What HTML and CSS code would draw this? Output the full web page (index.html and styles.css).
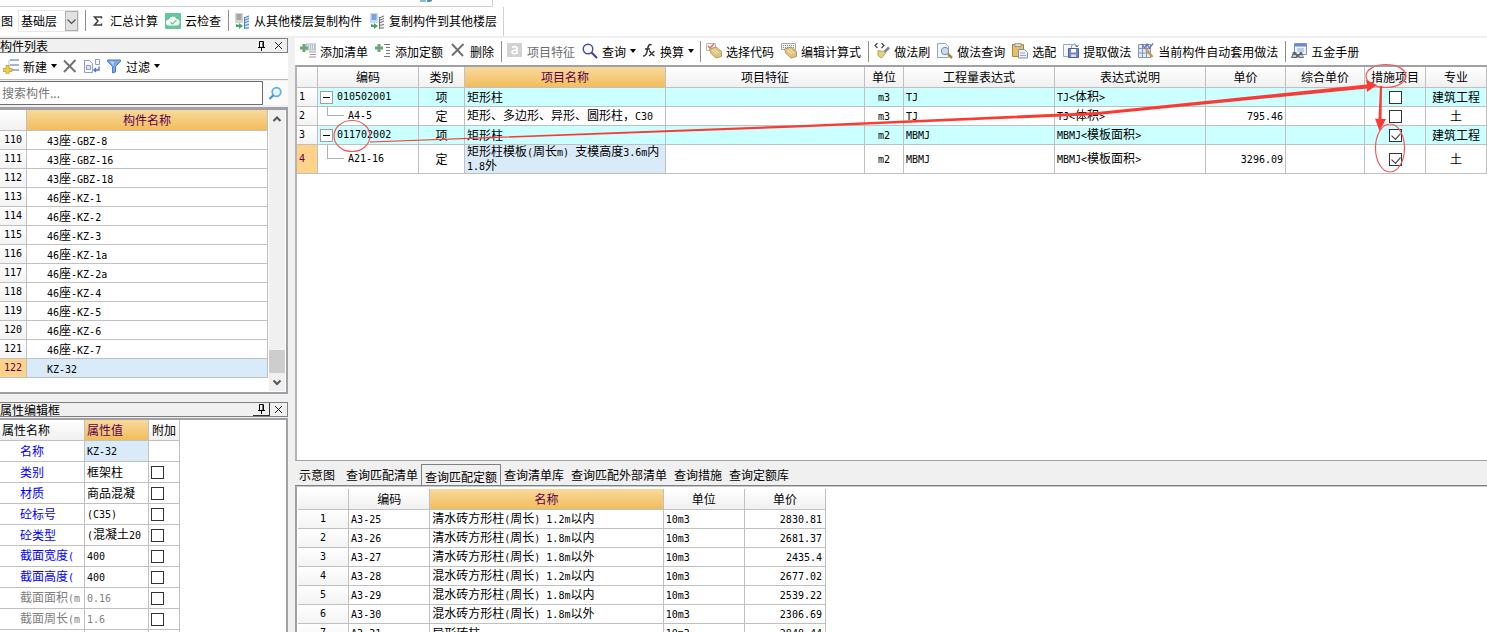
FILE: index.html
```html
<!DOCTYPE html>
<html lang="zh-CN">
<head>
<meta charset="utf-8">
<title>构件做法</title>
<link rel="stylesheet" href="styles.css">
</head>
<body>
<div class="app">
  <div class="upper-strip"><svg width="14" height="3" viewBox="0 0 14 3"><path d="M0 0h6v2H0z" fill="#7fc0d8"/><path d="M7 0h5v1l-2 1H7z" fill="#4f8fc0"/></svg></div>
  <div class="topbar">
    <span class="cut">图</span>
    <span class="select-box">
      <select aria-label="楼层"><option>基础层</option></select>
      <svg class="select-arrow" width="13" height="20" viewBox="0 0 13 20"><rect x=".5" y=".5" width="12" height="19" fill="#e1e1e1" stroke="#adadad"/><path d="M2.500 8.500l4 4 4-4" fill="none" stroke="#505050" stroke-width="1.200"/></svg>
    </span>
    <i class="sep"></i>
    <button class="tb"><svg width="15" height="16" viewBox="0 0 15 16"><path d="M10.500 5.500V4H3.500L7 8l-3.500 4h7v-1.500" fill="none" stroke="#404040" stroke-width="1.500"/></svg>汇总计算</button>
    <button class="tb"><svg width="16" height="16" viewBox="0 0 16 16"><rect width="16" height="16" rx="1" fill="#62c89a"/><path d="M4 12.500a3 3 0 0 1 0-6 4 4 0 0 1 7.500-.5 3.300 3.300 0 0 1 .5 6.500z" fill="#fff"/><path d="M5.500 9l2 2 4-4" fill="none" stroke="#62c89a" stroke-width="1.300"/></svg>云检查</button>
    <i class="sep"></i>
    <button class="tb"><svg width="16" height="16" viewBox="0 0 16 16"><path d="M1 0h8v10H1z" fill="#d4d4d4"/><path d="M2.500 2h5M2.500 4h5M2.500 6h5" stroke="#777"/><path d="M10 4l5-2v14h-5z" fill="#d7e7fa"/><path d="M10 5l5-2M10 7.500l5-2M10 10l5-2M10 12.500l5-1M10 15h5M10.500 4v12" stroke="#4a83c8" fill="none"/><path d="M2 11v3h3v2l4-3-4-3v2z" fill="#43a866"/></svg>从其他楼层复制构件</button>
    <button class="tb"><svg width="16" height="16" viewBox="0 0 16 16"><path d="M1 0h8v10H1z" fill="#c6dbf5"/><path d="M2.500 2h5M2.500 4h5M2.500 6h5" stroke="#356fb3"/><path d="M10 4l5-2v14h-5z" fill="#eee"/><path d="M10 5l5-2M10 7.500l5-2M10 10l5-2M10 12.500l5-1M10 15h5M10.500 4v12" stroke="#777" fill="none"/><path d="M2 11v3h3v2l4-3-4-3v2z" fill="#43a866"/></svg>复制构件到其他楼层</button>
  </div>

  <div class="main">
    <aside class="left">
      <section class="panel">
        <header class="title"><h2>构件列表</h2>
          <button class="tbtn" aria-label="固定"><svg width="9" height="10" viewBox="0 0 9 10"><path d="M2.500 6V.5h4V6M1 6.500h7M4.500 7v3M6 1v5" fill="none" stroke="#000"/></svg></button>
          <button class="tbtn" aria-label="关闭"><svg width="9" height="9" viewBox="0 0 9 9"><path d="M1 1l7 7M8 1L1 8" stroke="#222"/></svg></button>
        </header>
        <div class="ltools">
          <button class="tb"><svg width="16" height="16" viewBox="0 0 16 16"><path d="M7 2h9M7 7h9M7 12h9" stroke="#8aa0b8" stroke-width="1.500"/><path d="M6 2v10" stroke="#b8c6d4"/><path d="M3 7.500h3v3h3v3H6v3H3v-3H0v-3h3z" fill="#f2cc4e" stroke="#b9922c" stroke-width=".7"/></svg>新建<b class="caret"></b></button>
          <button class="tb" aria-label="删除"><svg width="16" height="16" viewBox="0 0 16 16"><path d="M2 2.500L13.500 14M13.500 2L2 14" stroke="#707070" stroke-width="1.900"/></svg></button>
          <button class="tb" aria-label="复制"><svg width="16" height="16" viewBox="0 0 16 16"><path d="M.5 2.500h5l3 3v9h-8z" fill="#f6f8fb" stroke="#8ba0c0"/><path d="M2.500 7.500h4v4h-4z" fill="#dce4f0" stroke="#8ba0c0"/><path d="M11.500 1.500h4v5h-4z" fill="#f6f8fb" stroke="#8ba0c0"/><path d="M15 8.500v3.500h-5M12 10l-2 2 2 2" fill="none" stroke="#4f6ee0" stroke-width="1.300"/></svg></button>
          <button class="tb"><svg width="16" height="16" viewBox="0 0 16 16"><path d="M1.500 2h13v1.500L9.500 8.500V14l-3 1V8.500l-5-5z" fill="#7ba6ea" stroke="#4c79c8"/><path d="M4 3.500h4L7.800 8z" fill="#bcd4fa"/></svg>过滤<b class="caret"></b></button>
        </div>
        <div class="search">
          <input type="text" placeholder="搜索构件..." aria-label="搜索构件">
          <button aria-label="搜索"><svg width="15" height="15" viewBox="0 0 15 15"><circle cx="8.500" cy="6" r="4.300" fill="#e9f5fd" stroke="#5fb0e6" stroke-width="1.800"/><path d="M5.300 9.300L1.500 13" stroke="#3d91d6" stroke-width="2.200"/></svg></button>
        </div>
        <div class="listbox">
          <table class="grid list">
            <colgroup><col class="w27"><col></colgroup>
            <thead><tr><th></th><th class="hot">构件名称</th></tr></thead>
            <tbody>
              <tr><th class="en">110</th><td><span class="en">43</span>座<span class="en">-GBZ-8</span></td></tr>
              <tr><th class="en">111</th><td><span class="en">43</span>座<span class="en">-GBZ-16</span></td></tr>
              <tr><th class="en">112</th><td><span class="en">43</span>座<span class="en">-GBZ-18</span></td></tr>
              <tr><th class="en">113</th><td><span class="en">46</span>座<span class="en">-KZ-1</span></td></tr>
              <tr><th class="en">114</th><td><span class="en">46</span>座<span class="en">-KZ-2</span></td></tr>
              <tr><th class="en">115</th><td><span class="en">46</span>座<span class="en">-KZ-3</span></td></tr>
              <tr><th class="en">116</th><td><span class="en">46</span>座<span class="en">-KZ-1a</span></td></tr>
              <tr><th class="en">117</th><td><span class="en">46</span>座<span class="en">-KZ-2a</span></td></tr>
              <tr><th class="en">118</th><td><span class="en">46</span>座<span class="en">-KZ-4</span></td></tr>
              <tr><th class="en">119</th><td><span class="en">46</span>座<span class="en">-KZ-5</span></td></tr>
              <tr><th class="en">120</th><td><span class="en">46</span>座<span class="en">-KZ-6</span></td></tr>
              <tr><th class="en">121</th><td><span class="en">46</span>座<span class="en">-KZ-7</span></td></tr>
              <tr class="sel"><th class="en">122</th><td><span class="en">KZ-32</span></td></tr>
            </tbody>
          </table>
          <div class="scroll">
            <svg width="16" height="18" viewBox="0 0 16 18"><path d="M4.500 11L8 7.500l3.500 3.500" fill="none" stroke="#555" stroke-width="2"/></svg>
            <div class="thumb"></div>
            <svg width="16" height="18" viewBox="0 0 16 18"><path d="M4.500 7.500L8 11l3.500-3.500" fill="none" stroke="#555" stroke-width="2"/></svg>
          </div>
        </div>
      </section>

      <section class="panel props">
        <header class="title"><h2>属性编辑框</h2>
          <button class="tbtn raised" aria-label="固定"><svg width="9" height="10" viewBox="0 0 9 10"><path d="M2.500 6V.5h4V6M1 6.500h7M4.500 7v3M6 1v5" fill="none" stroke="#000"/></svg></button>
          <button class="tbtn" aria-label="关闭"><svg width="9" height="9" viewBox="0 0 9 9"><path d="M1 1l7 7M8 1L1 8" stroke="#222"/></svg></button>
        </header>
        <div class="propbox">
          <table class="grid prop">
            <colgroup><col class="w84"><col class="w64"><col class="w31"></colgroup>
            <thead><tr><th>属性名称</th><th class="hot">属性值</th><th>附加</th></tr></thead>
            <tbody>
              <tr><td>名称</td><td class="cur en">KZ-32</td><td></td></tr>
              <tr><td>类别</td><td>框架柱</td><td><input type="checkbox" aria-label="类别附加"></td></tr>
              <tr><td>材质</td><td>商品混凝</td><td><input type="checkbox" aria-label="材质附加"></td></tr>
              <tr><td>砼标号</td><td class="en">(C35)</td><td><input type="checkbox" aria-label="砼标号附加"></td></tr>
              <tr><td>砼类型</td><td><span class="en">(</span>混凝土<span class="en">20</span></td><td><input type="checkbox" aria-label="砼类型附加"></td></tr>
              <tr><td>截面宽度<span class="en">(</span></td><td class="en">400</td><td><input type="checkbox" aria-label="截面宽度附加"></td></tr>
              <tr><td>截面高度<span class="en">(</span></td><td class="en">400</td><td><input type="checkbox" aria-label="截面高度附加"></td></tr>
              <tr class="off"><td>截面面积<span class="en">(m</span></td><td class="en">0.16</td><td><input type="checkbox" aria-label="截面面积附加"></td></tr>
              <tr class="off"><td>截面周长<span class="en">(m</span></td><td class="en">1.6</td><td><input type="checkbox" aria-label="截面周长附加"></td></tr>
              <tr><td></td><td></td><td></td></tr>
            </tbody>
          </table>
        </div>
      </section>
    </aside>

    <main class="right">
      <div class="tools">
        <button class="tb"><svg width="16" height="16" viewBox="0 0 16 16"><path d="M6 1h10v6H6z" fill="#e4e8f2" stroke="#9aa3b8" stroke-width=".8"/><path d="M8 3h7M8 5h7" stroke="#8490ac" stroke-dasharray="1 1"/><path d="M2.500 1h3v2.500H8v3H5.500V9h-3V6.500H0v-3h2.500z" fill="#6aa877"/><path d="M9 9h7M10 11.500h6M9 14h7" stroke="#999"/></svg>添加清单</button>
        <button class="tb"><svg width="16" height="16" viewBox="0 0 16 16"><path d="M2.500 1h3v2.500H8v3H5.500V9h-3V6.500H0v-3h2.500z" fill="#6aa877"/><path d="M9 1.500h6M11 4.500h4M11 7.500h4M11 10.500h4M9 13.500h6" stroke="#777"/></svg>添加定额</button>
        <button class="tb"><svg width="16" height="16" viewBox="0 0 16 16"><path d="M2 1l11 12M13.500 1L2 12.500" stroke="#707070" stroke-width="1.900"/></svg>删除</button>
        <i class="sep"></i>
        <button class="tb dis" disabled><svg width="16" height="16" viewBox="0 0 16 16"><rect x="0" y="0" width="15" height="14" fill="#d2d2d2"/><path d="M5 4.500c2-1.500 5-1 5 1V11M10 7c-3 0-5 .5-5 2.200S8.500 11.500 10 9.500" fill="none" stroke="#fff" stroke-width="1.700"/></svg>项目特征</button>
        <button class="tb"><svg width="16" height="16" viewBox="0 0 16 16"><circle cx="6" cy="6" r="4.800" fill="#f7f9ff" stroke="#4c4ca8" stroke-width="1.400"/><path d="M9.500 9.500L15 15" stroke="#3d3d98" stroke-width="2"/></svg>查询<b class="caret"></b></button>
        <button class="tb"><svg width="14" height="16" viewBox="0 0 14 16"><path d="M9.500 2C7 .3 6 3.500 5.500 6.500S4 13.500 1 13M3 6h5" fill="none" stroke="#333" stroke-width="1.500"/><path d="M7 8c2 0 3 5 5.500 4.500M12.500 8L7 13" fill="none" stroke="#333" stroke-width="1.300"/></svg>换算<b class="caret"></b></button>
        <i class="sep"></i>
        <button class="tb"><svg width="16" height="16" viewBox="0 0 16 16"><path d="M.5.5h9v7h-9z" fill="#f4f4f4" stroke="#bbb"/><path d="M2 3l2 2 4-4" fill="none" stroke="#d86c5c" stroke-width="1.300"/><path d="M3.500 6l6.500-2 5.500 4.500v5L10 15l-5-4.500z" fill="#dfc27c" stroke="#a68b4a" stroke-width=".8"/><path d="M6 7l5 4M8 6l5 4" stroke="#f7e8bd"/></svg>选择代码</button>
        <button class="tb"><svg width="16" height="16" viewBox="0 0 16 16"><path d="M.5.5h14v6H.5z" fill="#f1f1f1" stroke="#aaa"/><path d="M2 2.500h12M2 4.500h12" stroke="#888" stroke-dasharray="1 1"/><path d="M3.500 6l6.500-2 5.500 4.500v5L10 15l-5-4.500z" fill="#dfc27c" stroke="#a68b4a" stroke-width=".8"/><path d="M6 7l5 4M8 6l5 4" stroke="#f7e8bd"/></svg>编辑计算式</button>
        <i class="sep"></i>
        <button class="tb"><svg width="16" height="16" viewBox="0 0 16 16"><path d="M3.500 0L1 2.500 3.500 5M7.500 0L10 2.500 7.500 5" fill="none" stroke="#444" stroke-width="1.200"/><path d="M15 4.500L10.500 9" stroke="#7d8797" stroke-width="2.500"/><path d="M4 7.500l6 1 1.500 2L7.500 15 4 12.500z" fill="#e8d37b" stroke="#a7924b" stroke-width=".8"/></svg>做法刷</button>
        <button class="tb"><svg width="16" height="16" viewBox="0 0 16 16"><path d="M.5.5h8l3 3v11H.5z" fill="#f3f7fd" stroke="#93a7ca"/><circle cx="8" cy="8" r="3.700" fill="#c8dcf2" stroke="#7790ad"/><path d="M11 11l4 4" stroke="#b2883c" stroke-width="2.500"/></svg>做法查询</button>
        <button class="tb"><svg width="16" height="16" viewBox="0 0 16 16"><path d="M.5 1.500h11v12H.5z" fill="#e6bf66" stroke="#ad8537"/><path d="M3 .5h6v3H3z" fill="#d9dee6" stroke="#8a8a8a" stroke-width=".8"/><path d="M6.500 6.500h6l3 3v5.500h-9z" fill="#eef3fa" stroke="#7e90ad"/><path d="M8 10h5M8 12.500h6" stroke="#96a8c4"/></svg>选配</button>
        <button class="tb"><svg width="16" height="16" viewBox="0 0 16 16"><path d="M.5 1.500h8v12h-8z" fill="#f4f7fc" stroke="#97a8c8"/><path d="M5.500 5.500h10v9h-10z" fill="#7584c7" stroke="#4f5ea6"/><path d="M8 6h5v3.500H8z" fill="#fff"/><path d="M8 11.500h5V14H8z" fill="#d5dcf3"/><path d="M9 2.500c2-2 4-2 5 1.500M12 2.500l2 1.500 1.500-2" fill="none" stroke="#4b77be"/></svg>提取做法</button>
        <button class="tb"><svg width="16" height="16" viewBox="0 0 16 16"><path d="M.5 1.500h12v13H.5z" fill="#e5eaf8" stroke="#8495c4"/><path d="M1 5.500h11M1 10h11M4.500 2v12M8.500 2v12" stroke="#8495c4"/><path d="M4 1l2.500 4L9 1l2.500 4L15 .5" fill="none" stroke="#6275b8" stroke-width="1.300"/><path d="M8 6l6.500 8" stroke="#c89a4a" stroke-width="2.500"/></svg>当前构件自动套用做法</button>
        <i class="sep"></i>
        <button class="tb"><svg width="16" height="16" viewBox="0 0 16 16"><path d="M3.500.5h12v11h-12z" fill="#eef3fd" stroke="#7a94c8"/><path d="M4 1h11v2.500H4z" fill="#6a8bd0"/><path d="M6 6h7M6 8h7" stroke="#93a8d2"/><path d="M2 9h3l1 2h2l1-2h2l2 6H8l-1-1-1 1H0z" fill="#636b78"/><path d="M2 12h3v2H1.500zM8.500 12h3l.5 2H8.500z" fill="#c3cbd8"/></svg>五金手册</button>
      </div>

      <div class="workspace">
        <table class="grid work">
          <colgroup><col class="w21"><col class="w101"><col class="w46"><col class="w201"><col><col class="w39"><col class="w151"><col class="w151"><col class="w80"><col class="w79"><col class="w61"><col class="w61"></colgroup>
          <thead><tr><th></th><th>编码</th><th>类别</th><th class="hot">项目名称</th><th>项目特征</th><th>单位</th><th>工程量表达式</th><th>表达式说明</th><th>单价</th><th>综合单价</th><th>措施项目</th><th>专业</th></tr></thead>
          <tbody>
            <tr class="item"><th class="en">1</th><td class="tree"><div><button class="fold" aria-label="折叠"></button><span class="en">010502001</span></div></td><td class="c">项</td><td>矩形柱</td><td></td><td class="c en">m3</td><td class="en">TJ</td><td><span class="en">TJ&lt;</span>体积<span class="en">&gt;</span></td><td></td><td></td><td class="c"><input type="checkbox" aria-label="措施项目 1"></td><td class="c">建筑工程</td></tr>
            <tr><th class="en">2</th><td class="tree"><div><i class="elbow"></i><span class="en">A4-5</span></div></td><td class="c">定</td><td>矩形、多边形、异形、圆形柱，<span class="en">C30</span></td><td></td><td class="c en">m3</td><td class="en">TJ</td><td><span class="en">TJ&lt;</span>体积<span class="en">&gt;</span></td><td class="r en">795.46</td><td></td><td class="c"><input type="checkbox" aria-label="措施项目 2"></td><td class="c">土</td></tr>
            <tr class="item"><th class="en">3</th><td class="tree"><div><button class="fold" aria-label="折叠"></button><span class="en">011702002</span></div></td><td class="c">项</td><td>矩形柱</td><td></td><td class="c en">m2</td><td class="en">MBMJ</td><td><span class="en">MBMJ&lt;</span>模板面积<span class="en">&gt;</span></td><td></td><td></td><td class="c"><input type="checkbox" checked aria-label="措施项目 3"></td><td class="c">建筑工程</td></tr>
            <tr class="tall"><th class="en now">4</th><td class="tree"><div><i class="elbow"></i><span class="en">A21-16</span></div></td><td class="c">定</td><td class="cur">矩形柱模板<span class="en">(</span>周长<span class="en">m) </span>支模高度<span class="en">3.6m</span>内<br><span class="en">1.8</span>外</td><td></td><td class="c en">m2</td><td class="en">MBMJ</td><td><span class="en">MBMJ&lt;</span>模板面积<span class="en">&gt;</span></td><td class="r en">3296.09</td><td></td><td class="c"><input type="checkbox" checked aria-label="措施项目 4"></td><td class="c">土</td></tr>
          </tbody>
        </table>
        <svg class="marks" viewBox="0 1 1190 120" preserveAspectRatio="none">
          <g fill="none" stroke="#f25a5a" stroke-width="1.200"><ellipse cx="55" cy="70" rx="18" ry="15.500"/><ellipse cx="1089" cy="10" rx="20" ry="11.500"/><ellipse cx="1093" cy="82" rx="14.500" ry="24"/></g>
          <g fill="#fb3a34"><path d="M73 75.500L500 59.200 800 46 1070 18.500 1069 14 1080 19 1070 26 1070 22.500 800 49 500 61.500 73 76.500z"/><path d="M1083 20l2 0-.5 33 4.500 0L1082.500 65 1078 52.500l3.500.5z"/></g>
        </svg>
      </div>

      <nav class="tabs">
        <button class="first">示意图</button><button>查询匹配清单</button><button class="on">查询匹配定额</button><button>查询清单库</button><button>查询匹配外部清单</button><button>查询措施</button><button>查询定额库</button>
      </nav>
      <div class="result">
        <table class="grid quota">
          <colgroup><col class="w51"><col class="w81"><col class="w233"><col class="w81"><col class="w81"></colgroup>
          <thead><tr><th></th><th>编码</th><th class="hot">名称</th><th>单位</th><th>单价</th></tr></thead>
          <tbody>
            <tr><th class="en">1</th><td class="en">A3-25</td><td>清水砖方形柱<span class="en">(</span>周长<span class="en">) 1.2m</span>以内</td><td class="en">10m3</td><td class="r en">2830.81</td></tr>
            <tr><th class="en">2</th><td class="en">A3-26</td><td>清水砖方形柱<span class="en">(</span>周长<span class="en">) 1.8m</span>以内</td><td class="en">10m3</td><td class="r en">2681.37</td></tr>
            <tr><th class="en">3</th><td class="en">A3-27</td><td>清水砖方形柱<span class="en">(</span>周长<span class="en">) 1.8m</span>以外</td><td class="en">10m3</td><td class="r en">2435.4</td></tr>
            <tr><th class="en">4</th><td class="en">A3-28</td><td>混水砖方形柱<span class="en">(</span>周长<span class="en">) 1.2m</span>以内</td><td class="en">10m3</td><td class="r en">2677.02</td></tr>
            <tr><th class="en">5</th><td class="en">A3-29</td><td>混水砖方形柱<span class="en">(</span>周长<span class="en">) 1.8m</span>以内</td><td class="en">10m3</td><td class="r en">2539.22</td></tr>
            <tr><th class="en">6</th><td class="en">A3-30</td><td>混水砖方形柱<span class="en">(</span>周长<span class="en">) 1.8m</span>以外</td><td class="en">10m3</td><td class="r en">2306.69</td></tr>
            <tr><th class="en">7</th><td class="en">A3-31</td><td>异形砖柱</td><td class="en">10m3</td><td class="r en">2848.44</td></tr>
          </tbody>
        </table>
      </div>
    </main>
  </div>
</div>
</body>
</html>
```
FILE: styles.css
```css
* { box-sizing: border-box; }
body, button, input, select, table {
  font-family: "Noto Sans CJK SC", sans-serif;
  font-size: 12px;
  color: #000;
}
body { margin: 0; background: #fff; line-height: 16px; }
button { border: 0; background: none; padding: 0; margin: 0; }
svg { flex: none; display: block; }
.en { font-family: "DejaVu Sans Mono", "Noto Sans CJK SC", monospace; font-size: 10px; }

.app { height: 100vh; display: flex; flex-direction: column; overflow: hidden; }
.upper-strip { height: 7px; width: 493px; border-bottom: 1px solid #d0d0d0; border-right: 1px solid #d0d0d0; padding-left: 420px; }
.topbar { align-self: flex-start; height: 29px; display: flex; align-items: center; gap: 6px; border-right: 1px solid #d0d0d0; padding: 0 5px 2px 1px; }
.cut { margin-right: -1px; }
.sep { width: 1px; height: 21px; margin-right: -1px; background: #8c8c8c; }
.tb { display: flex; align-items: center; gap: 4px; padding-right: 1px; white-space: nowrap; height: 22px; }
.tb.dis { color: #6d6d6d; }
.caret { border: 3px solid transparent; border-top: 4px solid #000; border-bottom: 0; margin-right: -1px; }
.select-box { position: relative; width: 61px; height: 22px; border: 1px solid #e6e6e6; display: flex; }
.select-box select { appearance: none; border: 0; background: #fff; width: 100%; padding: 0 2px; }
.select-arrow { position: absolute; right: 0; top: 0; pointer-events: none; }

.main { flex: 1; min-height: 0; display: flex; gap: 7px; background: #f0f0f0; padding-top: 2px; }
.left { width: 288px; display: flex; flex-direction: column; gap: 8px; }
.title { display: flex; align-items: center; height: 15px; border: 1px solid #808080; border-left: 0; }
.title h2 { flex: 1; margin: 0; font-size: 12px; font-weight: 400; line-height: 12px; }
.tbtn { width: 17px; height: 13px; display: flex; align-items: center; justify-content: center; }
.tbtn.raised { border-right: 1px solid #333; border-bottom: 1px solid #333; }
.ltools { height: 27px; display: flex; align-items: center; gap: 5px; padding-left: 3px; background: #fff; border-bottom: 1px solid #b8b8b8; }
.search { display: flex; height: 28px; padding: 1px 0 2px; border-bottom: 1px solid #a0a0a0; }
.search input { width: 263px; border: 1px solid #6e6e6e; border-left: 0; padding: 0 2px 2px; background: #fff; outline: 0; }
.search input::placeholder { color: #757575; opacity: 1; }
.search button { flex: 1; display: flex; align-items: center; justify-content: center; background: #fafafa; }
.listbox { height: 286px; display: flex; gap: 1px; align-items: flex-start; background: #fff; border: 2px solid #a0a0a6; border-left: 0; padding-right: 1px; }

.grid { border-collapse: separate; border-spacing: 0; table-layout: fixed; }
.grid th, .grid td { height: 19px; padding: 0 2px; border-right: 1px solid #c0c0c0; border-bottom: 1px solid #c0c0c0; line-height: 12px; white-space: nowrap; font-weight: 400; text-align: left; }
.grid thead th { height: 21px; text-align: center; background: linear-gradient(#fff, #f0f0f0); }
.grid thead .hot { background: linear-gradient(#f9d99c, #f1bd5c); color: #5a0050; }
.grid tbody th { background: linear-gradient(#fff, #f3f3f3); text-align: center; }
.grid td.en { padding-top: 2px; }
.grid .c { text-align: center; }
.grid .r { text-align: right; }
.grid .cur { background: #d9eaf9; }
.w21 { width: 21px; } .w27 { width: 27px; } .w31 { width: 31px; } .w39 { width: 39px; }
.w46 { width: 46px; } .w51 { width: 51px; } .w61 { width: 61px; } .w64 { width: 64px; }
.w79 { width: 79px; } .w80 { width: 80px; } .w81 { width: 81px; } .w84 { width: 85px; }
.w101 { width: 101px; } .w151 { width: 151px; } .w201 { width: 201px; } .w233 { width: 233px; }

.list { width: 268px; }
.grid.list tbody td { padding: 2px 2px 0 20px; }
.list .sel td { background: #d9eaf9; }
.list .sel th, .work tbody .now { background: #ffd28a; color: #5a0050; }
.scroll { align-self: stretch; width: 16px; background: #f0f0f0; display: flex; flex-direction: column; margin-bottom: 1px; }
.thumb { margin-top: auto; height: 23px; background: #cdcdcd; }

.props { flex: 1; min-height: 0; display: flex; flex-direction: column; gap: 1px; }
.propbox { flex: 1; min-height: 0; overflow: hidden; background: #fff; border: 2px solid #a0a0a6; border-left: 0; border-bottom: 0; }
.prop { width: 180px; }
.prop th:first-child, .grid.prop th.hot { text-align: left; }
.grid.prop tbody td { height: 21px; }
.grid.prop tbody td:first-child { padding-left: 20px; padding-right: 0; color: #00f; }
.grid.prop .off td, .grid.prop tbody .off td:first-child { color: #808080; }

input[type="checkbox"] { appearance: none; display: inline-block; position: relative; width: 13px; height: 13px; margin: 0; border: 1px solid #333; background: #fff; vertical-align: middle; }
input[type="checkbox"]:checked::after { content: ""; position: absolute; left: 3px; top: 1px; width: 5px; height: 7px; border: solid #333; border-width: 0 1px 1px 0; transform: rotate(42deg); }

.right { flex: 1; min-width: 0; display: flex; flex-direction: column; }
.tools { height: 27px; display: flex; align-items: center; gap: 6px; background: #fff; padding: 0 0 1px 5px; }
.workspace { position: relative; height: 396px; background: #fff; border-top: 2px solid #a0a0a6; border-left: 2px solid #b4b4b4; border-bottom: 1px solid #a0a0a6; }
.work { width: 100%; }
.work .item td { background: #ccffff; }
.grid.work tbody th { text-align: left; }
.work .tall td, .work .tall th { height: 29px; }
.tree > div { display: flex; align-items: center; height: 18px; }
.tall .tree > div { height: 28px; }
.fold { width: 13px; height: 13px; border: 1px solid #a0a0a0; background: #fff; margin-right: 4px; display: flex; align-items: center; justify-content: center; }
.fold::before { content: ""; width: 7px; height: 1px; background: #000; }
.elbow { align-self: flex-start; width: 17px; height: 50%; margin: 0 4px 0 7px; border-left: 1px solid #b0b0b0; border-bottom: 1px solid #b0b0b0; }
.marks { position: absolute; left: 0; top: 0; width: 100%; height: 120px; pointer-events: none; overflow: visible; }

.tabs { display: flex; align-items: center; gap: 7px; height: 25px; padding: 3px 0 0 4px; border-bottom: 1px solid #808080; }
.tabs button { height: 20px; white-space: nowrap; }
.tabs .first { margin-right: 4px; }
.tabs .on { height: 21px; padding: 3px 3px 0; margin: 0 -4px; border: 1px solid #808080; border-bottom: 0; }
.result { flex: 1; min-height: 0; overflow: hidden; background: #fff; border-left: 2px solid #a0a0a6; border-top: 1px solid #c8c8c8; padding: 2px 0 0 1px; }
.quota { width: 528px; }
.grid.quota .r { padding-right: 3px; }
```
